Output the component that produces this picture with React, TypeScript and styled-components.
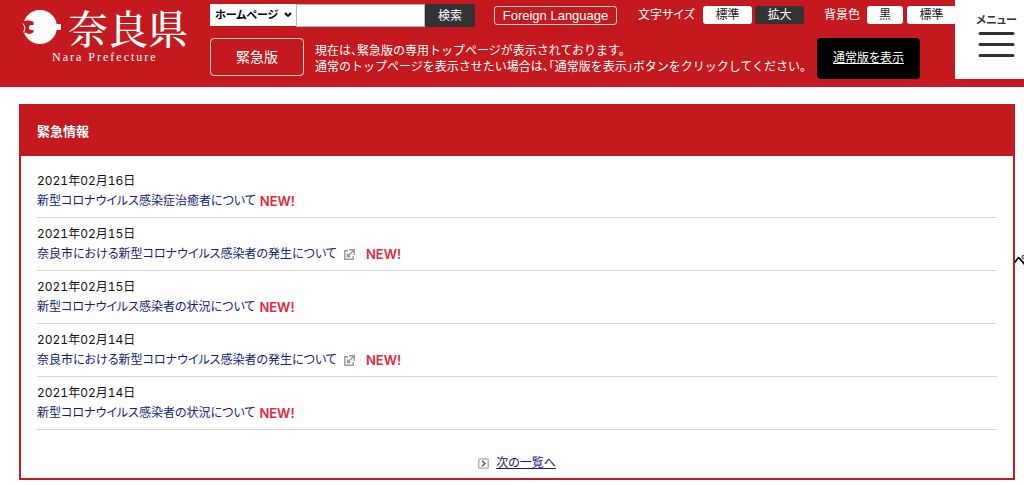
import React from 'react';
import styled, { createGlobalStyle } from 'styled-components';

const red = '#c51920';

const GlobalStyle = createGlobalStyle`
  *, *::before, *::after { box-sizing: border-box; }
  body {
    margin: 0;
    background: #fff;
    color: #111;
    font: 12px/20px Inter, "Noto Sans CJK JP", sans-serif;
    font-feature-settings: "palt";
    overflow-x: hidden;
  }
  button, input, select { font: inherit; font-feature-settings: inherit; }
`;

const Header = styled.header`
  display: flex;
  gap: 22px;
  min-height: 87px;
  padding: 4px 104px 8px 22px;
  background: ${red};
  color: #fff;
`;

const Logo = styled.a`
  flex: none;
  width: 166px;
  color: #fff;
  text-decoration: none;
`;

const LogoTop = styled.span`
  display: flex;
  align-items: center;
  justify-content: space-between;
  height: 45px;
`;

const LogoName = styled.span`
  font: 500 40px/44px "Noto Serif CJK JP", "Noto Sans CJK JP", serif;
  font-feature-settings: normal;
`;

const LogoRoman = styled.span`
  display: block;
  padding-left: 30px;
  font: 12px/16px "Liberation Serif", serif;
  letter-spacing: 2px;
  white-space: nowrap;
`;

const HeaderMain = styled.div`
  display: flex;
  flex-direction: column;
  gap: 11px;
  flex: none;
`;

const ToolRow = styled.div`
  display: flex;
  align-items: flex-start;
  white-space: nowrap;
`;

const SearchForm = styled.form`
  display: flex;
  height: 23px;
  margin-right: 19px;
`;

const SelectWrap = styled.div`
  position: relative;
  width: 86px;
  svg {
    position: absolute;
    right: 4px;
    top: 8px;
    pointer-events: none;
  }
`;

const ScopeSelect = styled.select`
  appearance: none;
  width: 100%;
  height: 22px;
  padding: 0 0 0 5px;
  border: 0;
  border-radius: 0;
  background: #fff;
  color: #000;
  font-size: 11px;
  font-weight: 600;
  line-height: 22px;
`;

const SearchInput = styled.input`
  width: 129px;
  height: 23px;
  padding: 0 4px;
  border: 1px solid #bbb;
  border-radius: 0;
  background: #fff;
`;

const SearchButton = styled.button`
  width: 50px;
  height: 23px;
  padding: 0;
  border: 0;
  background: #333;
  color: #fff;
`;

const LanguageLink = styled.a`
  width: 123px;
  height: 19px;
  margin: 2px 21px 0 0;
  border: 1px solid #f3cfd1;
  border-radius: 3px;
  color: #fff;
  font-family: "Liberation Sans", sans-serif;
  font-size: 13px;
  line-height: 17px;
  text-align: center;
  text-decoration: none;
`;

const OptionGroup = styled.div<{ $gap: number }>`
  display: flex;
  align-items: center;
  gap: ${(p) => p.$gap}px;
  height: 18px;
  margin: 2px 20px 0 0;
`;

const OptionLabel = styled.span<{ $width: number }>`
  width: ${(p) => p.$width}px;
`;

const OptionButton = styled.button<{ $dark?: boolean; $narrow?: boolean }>`
  width: ${(p) => (p.$narrow ? 36 : 49)}px;
  height: 18px;
  padding: 0;
  border: 0;
  border-radius: 3px;
  background: ${(p) => (p.$dark ? '#333' : '#fff')};
  color: ${(p) => (p.$dark ? '#fff' : '#222')};
  line-height: 18px;
`;

const NoticeRow = styled.div`
  display: flex;
  align-items: flex-start;
`;

const ModeBadge = styled.span`
  width: 94px;
  height: 38px;
  margin-right: 11px;
  border: 1px solid #f3cfd1;
  border-radius: 4px;
  font-size: 14px;
  line-height: 36px;
  text-align: center;
`;

const Notice = styled.p`
  width: 502px;
  margin: 5px 0 0;
  font-feature-settings: "halt";
  line-height: 16px;
  white-space: nowrap;
`;

const NormalLink = styled.a`
  width: 103px;
  height: 41px;
  border-radius: 4px;
  background: #000;
  color: #fff;
  line-height: 40px;
  text-align: center;
`;

const MenuButton = styled.button`
  position: fixed;
  top: 0;
  right: 0;
  display: flex;
  flex-direction: column;
  align-items: center;
  width: 69px;
  height: 79px;
  padding: 10px 0 0 14px;
  border: 0;
  background: #fff;
  color: #333;
  font-size: 11px;
  font-weight: 700;
  line-height: 20px;
`;

const PageTop = styled.a`
  position: fixed;
  top: 251px;
  left: calc(100% - 10px);
  color: #000;
  font-weight: 700;
  text-decoration: none;
  white-space: nowrap;
`;

const Panel = styled.main`
  margin: 17px 9px 5px 19px;
  border: 2px solid ${red};
`;

const PanelTitle = styled.h1`
  margin: 0;
  padding: 15px 16px;
  background: ${red};
  color: #fff;
  font-size: 13px;
  font-weight: 700;
  line-height: 20px;
`;

const NewsList = styled.ul`
  margin: 0;
  padding: 9px 16px 0;
  list-style: none;
`;

const NewsItem = styled.li`
  padding: 6px 0;
  border-bottom: 1px solid #d6d6d6;
`;

const NewsDate = styled.time`
  display: block;
  font-feature-settings: "palt", "tnum";
`;

const NewsLine = styled.div`
  display: flex;
  align-items: center;
`;

const NewsLink = styled.a`
  display: flex;
  align-items: center;
  gap: 7px;
  color: #131b7c;
  text-decoration: none;
`;

const NewMark = styled.strong<{ $wide: boolean }>`
  margin-left: ${(p) => (p.$wide ? 11 : 4)}px;
  color: #e6283c;
  font-size: 13px;
  font-weight: 600;
`;

const More = styled.div`
  display: flex;
  align-items: center;
  justify-content: center;
  gap: 7px;
  padding: 23px 0 5px;
  a { color: #131b7c; }
`;

const ExternalIcon = () => (
  <svg width="11" height="11" viewBox="0 0 11 11" fill="none" stroke="#999" strokeWidth="1.4" aria-hidden="true">
    <path d="M4 1.7H.8v8.5h8.4V7" />
    <path d="M5 .8h5.2V6M9.8 1.2 4 7M3.5 4.5v3h3" />
  </svg>
);

const NextIcon = () => (
  <svg width="11" height="11" viewBox="0 0 11 11" fill="none" aria-hidden="true">
    <rect x=".8" y=".8" width="9.4" height="9.4" rx="1" stroke="#aaa" strokeWidth="1.3" />
    <path d="m4 2.8 3 2.7-3 2.7" stroke="#555" strokeWidth="1.4" />
  </svg>
);

const news = [
  { date: '2021-02-16', label: '2021年02月16日', title: '新型コロナウイルス感染症治癒者について', external: false },
  { date: '2021-02-15', label: '2021年02月15日', title: '奈良市における新型コロナウイルス感染者の発生について', external: true },
  { date: '2021-02-15', label: '2021年02月15日', title: '新型コロナウイルス感染者の状況について', external: false },
  { date: '2021-02-14', label: '2021年02月14日', title: '奈良市における新型コロナウイルス感染者の発生について', external: true },
  { date: '2021-02-14', label: '2021年02月14日', title: '新型コロナウイルス感染者の状況について', external: false },
];

export default function App() {
  return (
    <>
      <GlobalStyle />
      <Header>
        <Logo href="#">
          <LogoTop>
            <svg width="40" height="36" viewBox="0 0 40 36" aria-hidden="true">
              <circle cx="18" cy="18" r="17" fill="#fff" />
              <path d="M34 15h5v6h-5z" fill="#fff" />
              <path d="M0 13c3-2 9-2 11.500 0v3H9c-1.500 0-2 1-2 2.500S7.500 21 9 21h2.500v2c-2 2.500-6 2.500-8 .500L0 25z" fill={red} />
              <path d="M1.200 14.500 3 18.500l-1.300 5" stroke="#fff" strokeWidth="1" fill="none" />
            </svg>
            <LogoName>奈良県</LogoName>
          </LogoTop>
          <LogoRoman>Nara Prefecture</LogoRoman>
        </Logo>
        <HeaderMain>
          <ToolRow>
            <SearchForm onSubmit={(e) => e.preventDefault()}>
              <SelectWrap>
                <ScopeSelect aria-label="検索対象">
                  <option>ホームページ</option>
                </ScopeSelect>
                <svg width="8" height="6" viewBox="0 0 8 6" fill="none" stroke="#000" strokeWidth="1.8" aria-hidden="true">
                  <path d="m1 1 3 3 3-3" />
                </svg>
              </SelectWrap>
              <SearchInput type="text" aria-label="検索キーワード" />
              <SearchButton type="submit">検索</SearchButton>
            </SearchForm>
            <LanguageLink href="#">Foreign Language</LanguageLink>
            <OptionGroup $gap={3}>
              <OptionLabel $width={62}>文字サイズ</OptionLabel>
              <OptionButton type="button">標準</OptionButton>
              <OptionButton type="button" $dark>拡大</OptionButton>
            </OptionGroup>
            <OptionGroup $gap={4}>
              <OptionLabel $width={39}>背景色</OptionLabel>
              <OptionButton type="button" $narrow>黒</OptionButton>
              <OptionButton type="button">標準</OptionButton>
            </OptionGroup>
          </ToolRow>
          <NoticeRow>
            <ModeBadge>緊急版</ModeBadge>
            <Notice>
              現在は、緊急版の専用トップページが表示されております。
              <br />
              通常のトップページを表示させたい場合は、「通常版を表示」ボタンをクリックしてください。
            </Notice>
            <NormalLink href="#">通常版を表示</NormalLink>
          </NoticeRow>
        </HeaderMain>
        <MenuButton type="button">
          メニュー
          <svg width="37" height="27" viewBox="0 0 37 27" stroke="#333" strokeWidth="3" strokeLinecap="round" aria-hidden="true">
            <path d="M2 3.5h33M2 14.5h33M2 25.5h33" />
          </svg>
        </MenuButton>
      </Header>
      <Panel>
        <PanelTitle>緊急情報</PanelTitle>
        <NewsList>
          {news.map((item, i) => (
            <NewsItem key={i}>
              <NewsDate dateTime={item.date}>{item.label}</NewsDate>
              <NewsLine>
                <NewsLink href="#">
                  {item.title}
                  {item.external && <ExternalIcon />}
                </NewsLink>
                <NewMark $wide={item.external}>NEW!</NewMark>
              </NewsLine>
            </NewsItem>
          ))}
        </NewsList>
        <More>
          <NextIcon />
          <a href="#">次の一覧へ</a>
        </More>
      </Panel>
      <PageTop href="#">ページトップへ</PageTop>
    </>
  );
}
